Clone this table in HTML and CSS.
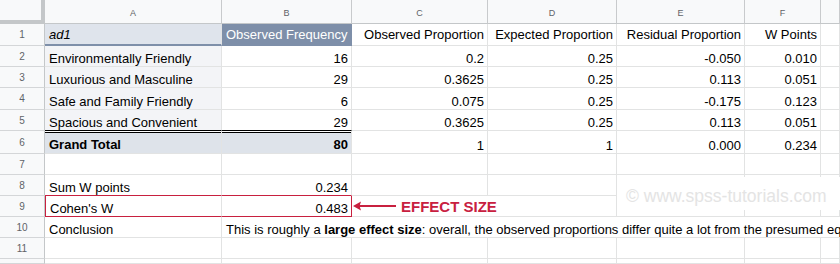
FILE: index.html
```html
<!DOCTYPE html>
<html>
<head>
<meta charset="utf-8">
<link rel="stylesheet" href="styles.css">
</head>
<body>
<div class="sheet">
  <div class="corner"></div>
  <div class="ch">A</div><div class="ch">B</div><div class="ch">C</div><div class="ch">D</div><div class="ch">E</div><div class="ch">F</div><div class="ch"></div>

  <div class="rh">1</div>
  <div class="c r1 hdr-a"><i>ad1</i></div>
  <div class="c r1 hdr-b">Observed Frequency</div>
  <div class="c r1 num">Observed Proportion</div>
  <div class="c r1 num">Expected Proportion</div>
  <div class="c r1 num">Residual Proportion</div>
  <div class="c r1 num">W Points</div>
  <div class="c r1"></div>

  <div class="rh">2</div>
  <div class="c band">Environmentally Friendly</div>
  <div class="c num">16</div><div class="c num">0.2</div><div class="c num">0.25</div><div class="c num">-0.050</div><div class="c num">0.010</div><div class="c"></div>

  <div class="rh">3</div>
  <div class="c band">Luxurious and Masculine</div>
  <div class="c num">29</div><div class="c num">0.3625</div><div class="c num">0.25</div><div class="c num">0.113</div><div class="c num">0.051</div><div class="c"></div>

  <div class="rh">4</div>
  <div class="c band">Safe and Family Friendly</div>
  <div class="c num">6</div><div class="c num">0.075</div><div class="c num">0.25</div><div class="c num">-0.175</div><div class="c num">0.123</div><div class="c"></div>

  <div class="rh">5</div>
  <div class="c band dbl-bottom">Spacious and Convenient</div>
  <div class="c num dbl-bottom">29</div><div class="c num">0.3625</div><div class="c num">0.25</div><div class="c num">0.113</div><div class="c num">0.051</div><div class="c"></div>

  <div class="rh">6</div>
  <div class="c total dbl-top">Grand Total</div>
  <div class="c num total dbl-top">80</div><div class="c num">1</div><div class="c num">1</div><div class="c num">0.000</div><div class="c num">0.234</div><div class="c"></div>

  <div class="rh">7</div>
  <div class="c"></div><div class="c"></div><div class="c"></div><div class="c"></div><div class="c"></div><div class="c"></div><div class="c"></div>

  <div class="rh">8</div>
  <div class="c red-under">Sum W points</div>
  <div class="c num red-under">0.234</div><div class="c"></div><div class="c"></div><div class="c"></div><div class="c"></div><div class="c"></div>

  <div class="rh">9</div>
  <div class="c red-under red-left">Cohen's W</div>
  <div class="c num red-under red-right">0.483</div>
  <div class="c span2 callout">
    <svg class="arrow" width="44" height="12" viewBox="0 0 44 12"><line x1="6" y1="6" x2="43" y2="6" stroke="#c8203f" stroke-width="2"/><polygon points="0,6 8,1.4 6.6,6 8,10.6" fill="#c8203f"/></svg>
    <span class="label">EFFECT SIZE</span>
  </div>
  <div class="c"></div><div class="c"></div><div class="c"></div>

  <div class="rh">10</div>
  <div class="c">Conclusion</div>
  <div class="c spanrest"><span>This is roughly a <b>large effect size</b>: overall, the observed proportions differ quite a lot from the presumed equal proportions.</span></div>

  <div class="rh">11</div>
  <div class="c"></div><div class="c"></div><div class="c"></div><div class="c"></div><div class="c"></div><div class="c"></div><div class="c"></div>

  <div class="rh"></div>
  <div class="c"></div><div class="c"></div><div class="c"></div><div class="c"></div><div class="c"></div><div class="c"></div><div class="c"></div>

  <div class="watermark">© www.spss-tutorials.com</div>
</div>
</body>
</html>
```

FILE: styles.css
```css
html, body {
  margin: 0;
  padding: 0;
  background: #fff;
  overflow: hidden;
}

.sheet {
  position: relative;
  width: 840px;
  height: 264px;
  overflow: hidden;
  display: grid;
  grid-template-columns: 45px 177px 130px 136px 129px 128px 76px 19px;
  grid-template-rows: 24px 22px 21px 21px 22px 21px 23px 21px 21px 21px 21px 21px 1fr;
  font-family: "Liberation Sans", Arial, sans-serif;
  font-size: 13px;
  color: #000;
}

.sheet > div {
  box-sizing: border-box;
  min-width: 0;
}

.corner {
  background: #f8f9fa;
  border-right: 4px solid #c4c7c9;
  border-bottom: 4px solid #c4c7c9;
}

.ch {
  background: #f8f9fa;
  border-right: 1px solid #c8cacc;
  border-bottom: 1px solid #c4c7c9;
  color: #5f6368;
  font-size: 9px;
  display: flex;
  align-items: center;
  justify-content: center;
  padding-top: 2px;
}

.rh {
  background: #f8f9fa;
  border-right: 1px solid #c4c7c9;
  border-bottom: 1px solid #d4d6d8;
  color: #5f6368;
  font-size: 10px;
  display: flex;
  align-items: center;
  justify-content: center;
}

.c {
  border-right: 1px solid #e2e3e3;
  border-bottom: 1px solid #e2e3e3;
  display: flex;
  align-items: flex-end;
  line-height: 15px;
  padding: 0 3px 0 4px;
  white-space: nowrap;
  overflow: hidden;
}

.num {
  justify-content: flex-end;
}

.r1 {
  align-items: center;
}

.hdr-a {
  background: #dfe4ec;
  border-bottom: 2px solid #7e8fa9;
}

.hdr-b {
  background: #7e8fa9;
  color: #fff;
  border-bottom: 2px solid #7e8fa9;
  border-right-color: #7e8fa9;
}

.band {
  background: #f3f4f7;
}

.dbl-bottom {
  border-bottom-color: #000;
}

.dbl-top {
  box-shadow: inset 0 1px 0 #fff, inset 0 2px 0 #000;
  padding-bottom: 1px;
}

.total {
  background: #dee3ea;
  font-weight: bold;
}

.red-under {
  border-bottom-color: #c8203f;
}

.red-left {
  border-left: 1px solid #c8203f;
}

.red-right {
  border-right-color: #c8203f;
}

.span2 {
  grid-column: span 2;
}

.callout {
  align-items: center;
  padding: 0 0 0 1px;
  overflow: visible;
}

.arrow {
  display: block;
  flex: none;
}

.label {
  margin-left: 4px;
  color: #c8203f;
  font-weight: bold;
  font-size: 15px;
  line-height: 15px;
}

.spanrest {
  grid-column: 3 / -1;
  border-right: none;
}

.watermark {
  position: absolute;
  left: 617px;
  top: 177px;
  width: 223px;
  height: 33px;
  padding: 5px 0 0 9px;
  background: #fff;
  color: #e4e4e4;
  font-size: 17.5px;
  display: flex;
  align-items: center;
  white-space: nowrap;
}
```
